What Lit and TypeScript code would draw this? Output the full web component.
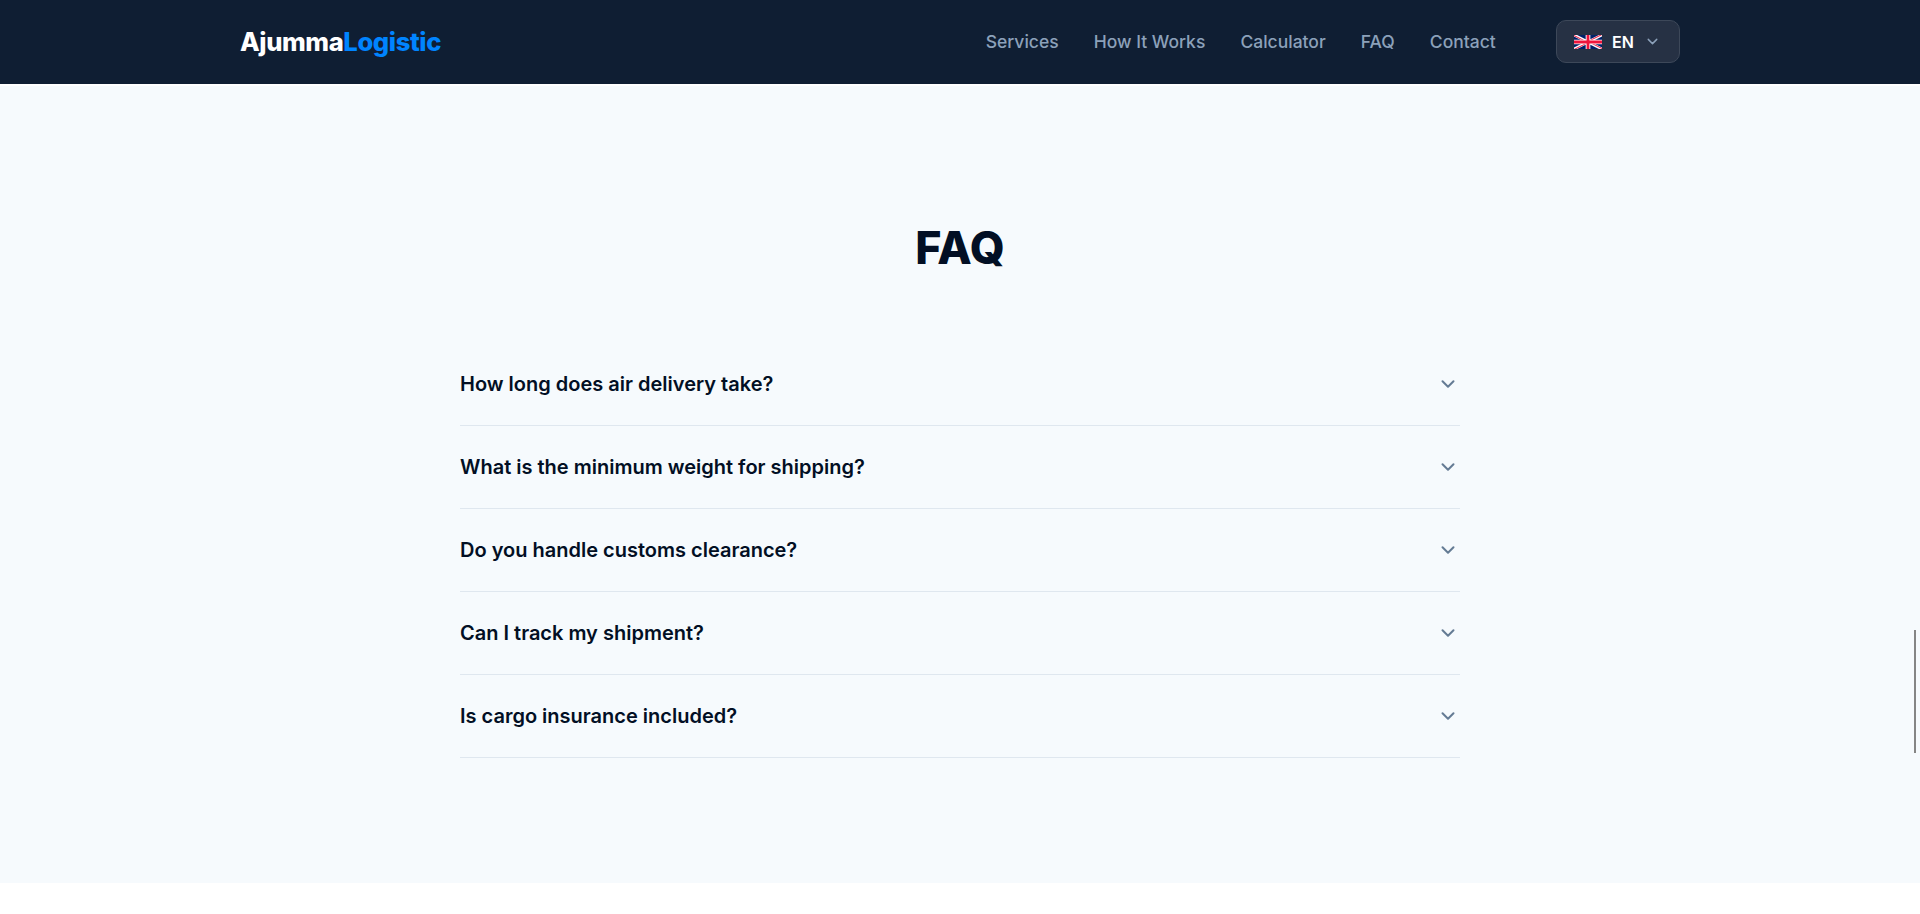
import { LitElement, html, css } from "lit";

const NAV = ["Services", "How It Works", "Calculator", "FAQ", "Contact"];
const QUESTIONS = [
  "How long does air delivery take?",
  "What is the minimum weight for shipping?",
  "Do you handle customs clearance?",
  "Can I track my shipment?",
  "Is cargo insurance included?",
];

const chevron = (cls: string, w: number) => html`<svg class=${cls} viewBox="0 0 24 24" fill="none" stroke="currentColor"
  stroke-width=${w} stroke-linecap="round" stroke-linejoin="round"><path d="M6 9l6 6 6-6"></path></svg>`;

const flag = html`<svg class="flag" viewBox="0 0 60 30">
  <clipPath id="t"><path d="M30 15h30v15zv15H0zH0V0zV0h30z"/></clipPath>
  <path d="M0 0h60v30H0z" fill="#012169"/>
  <path d="M0 0l60 30M60 0L0 30" stroke="#fff" stroke-width="6"/>
  <path d="M0 0l60 30M60 0L0 30" clip-path="url(#t)" stroke="#f0143c" stroke-width="4"/>
  <path d="M30 0v30M0 15h60" stroke="#fff" stroke-width="10"/>
  <path d="M30 0v30M0 15h60" stroke="#f0143c" stroke-width="6"/>
</svg>`;

class AppRoot extends LitElement {
  static styles = css`
    :host { display: block; height: 914px; overflow: hidden; background: #fff; font-family: Inter, sans-serif; position: relative; }
    * { box-sizing: border-box; }
    header { height: 84px; background: #0f1e33; }
    .bar { width: 1440px; height: 83px; margin: 0 auto; display: flex; align-items: center; }
    .logo { font-size: 25.6px; font-weight: 800; letter-spacing: -0.4px; color: #fff; margin-right: auto; }
    .logo span { color: #0084ff; }
    nav { display: flex; gap: 35.1px; margin-right: 60.2px; }
    nav a { font-size: 17.5px; font-weight: 500; color: #8ca1ba; }
    .lang { display: flex; align-items: center; width: 124px; height: 43px; padding: 0 17px; border: 1px solid #3d4859; border-radius: 10px; background: #263144; color: #fff; font: 600 16px Inter, sans-serif; }
    .flag { width: 28px; height: 14px; margin-right: 10px; }
    .chev-sm { width: 17px; height: 17px; margin-left: 10.5px; color: #8ca1ba; }
    main { height: 799px; padding-top: 135px; border-top: 2px solid #fff; background: #f6fafd; }
    h2 { margin: 0; text-align: center; font-size: 44.8px; line-height: 54px; font-weight: 800; color: #020f24; }
    .list { width: 1000px; margin: 68px auto 0; }
    .item { display: flex; justify-content: space-between; align-items: center; height: 83px; padding-right: 1.5px; border-bottom: 1px solid #dfe7ef; font-size: 20px; font-weight: 600; color: #020f24; }
    .chev { width: 22px; height: 22px; color: #647b94; }
    .thumb { position: absolute; right: 4px; top: 630px; width: 2px; height: 123px; background: #858585; }
  `;
  render() {
    return html`
      <header><div class="bar">
        <div class="logo">Ajumma<span>Logistic</span></div>
        <nav>${NAV.map((n) => html`<a>${n}</a>`)}</nav>
        <button class="lang">${flag}EN${chevron("chev-sm", 2)}</button>
      </div></header>
      <main>
        <h2>FAQ</h2>
        <div class="list">${QUESTIONS.map((q) => html`<div class="item"><span>${q}</span>${chevron("chev", 2.2)}</div>`)}</div>
      </main>
      <div class="thumb"></div>`;
  }
}
customElements.define("app-root", AppRoot);
